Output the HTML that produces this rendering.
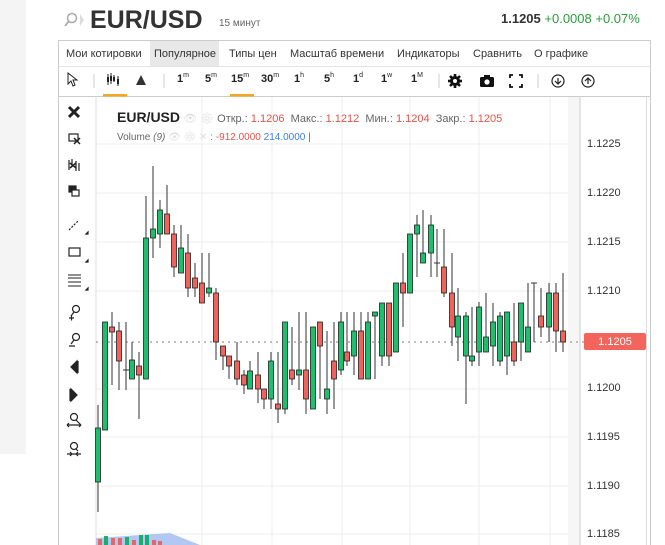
<!DOCTYPE html>
<html><head><meta charset="utf-8"><style>
*{margin:0;padding:0;box-sizing:border-box}
body{width:665px;height:545px;overflow:hidden;background:#fff;font-family:"Liberation Sans",sans-serif;position:relative;color:#333}
.a{position:absolute;white-space:nowrap}
.menu span{position:absolute;top:0;font-size:11px;line-height:26px;color:#333}
.tb{position:absolute;top:72px;font-size:11px;font-weight:bold;color:#222}
.tb sup{font-size:7px;font-weight:normal;vertical-align:5px}
.pl{position:absolute;left:587px;font-size:11px;color:#333}
</style></head><body>
<div class="a" style="left:0;top:0;width:26px;height:454px;background:#f4f4f4"></div>
<svg class="a" style="left:62px;top:11px" width="24" height="18"><circle cx="10" cy="7" r="4.5" fill="none" stroke="#aaa" stroke-width="1.5"/><line x1="7" y1="10" x2="3" y2="15" stroke="#aaa" stroke-width="1.8"/><path d="M18 3 L22 9 L18 15" fill="#ddd"/></svg>
<div class="a" style="left:90px;top:6px;font-size:25px;font-weight:bold;color:#333">EUR/USD</div>
<div class="a" style="left:219px;top:18px;font-size:10px;color:#666">15 минут</div>
<div class="a" style="left:501px;top:11px;font-size:13px"><b style="color:#333">1.1205</b> <span style="color:#2a9d3a">+0.0008 +0.07%</span></div>
<div class="a menu" style="left:58px;top:40px;width:593px;height:27px;border:1px solid #ccc;border-bottom:none">
<span style="left:7px">Мои котировки</span>
<span style="left:91px;width:69px;background:#e8e8e8;padding-left:4px">Популярное</span>
<span style="left:170px">Типы цен</span>
<span style="left:231px">Масштаб времени</span>
<span style="left:338px">Индикаторы</span>
<span style="left:414px">Сравнить</span>
<span style="left:475px">О графике</span>
</div>
<div class="a" style="left:58px;top:66px;width:593px;height:31px;border:1px solid #ccc;border-top:1px solid #e3e3e3"></div>
<svg class="a" style="left:58px;top:66px" width="593" height="31">
<path d="M10 7 L10 18 L13 15 L15 20 L17 19 L15 14 L19 14 Z" fill="#fff" stroke="#222" stroke-width="1"/>
<line x1="36" y1="8" x2="36" y2="22" stroke="#ccc"/>
<g stroke="#222"><line x1="50" y1="8" x2="50" y2="19"/><line x1="53" y1="7" x2="53" y2="18"/><line x1="56" y1="9" x2="56" y2="16"/><line x1="60" y1="10" x2="60" y2="20"/></g>
<g fill="#222"><rect x="49" y="11" width="2" height="5"/><rect x="52" y="10" width="2" height="5"/><rect x="55" y="11" width="2" height="4"/><rect x="59" y="13" width="2" height="5"/></g>
<rect x="45" y="28" width="24" height="2.5" fill="#f5a623"/>
<path d="M78 19 L83 9 L88 19 Z" fill="#333"/>
<line x1="106" y1="8" x2="106" y2="22" stroke="#ccc"/>
<rect x="172" y="28" width="24" height="2.5" fill="#f5a623"/>
<line x1="381" y1="8" x2="381" y2="22" stroke="#ccc"/>
<g transform="translate(397,15)"><circle r="5" fill="#111"/><g stroke="#111" stroke-width="2.6"><line x1="0" y1="-7" x2="0" y2="7"/><line x1="-7" y1="0" x2="7" y2="0"/><line x1="-5" y1="-5" x2="5" y2="5"/><line x1="-5" y1="5" x2="5" y2="-5"/></g><circle r="2" fill="#fff"/></g>
<g transform="translate(429,15)"><rect x="-7" y="-4" width="14" height="10" rx="1.5" fill="#111"/><rect x="-3" y="-6" width="6" height="3" fill="#111"/><circle cy="1" r="2.6" fill="#fff"/></g>
<g transform="translate(458,15)" stroke="#111" stroke-width="1.8" fill="none"><path d="M-6 -3V-6H-3M3 -6H6V-3M6 3V6H3M-3 6H-6V3"/></g>
<line x1="480" y1="8" x2="480" y2="22" stroke="#ccc"/>
<g transform="translate(500,15)" fill="none" stroke="#222" stroke-width="1.2"><circle r="6"/><path d="M0 -3V3M-3 0L0 3L3 0"/></g>
<g transform="translate(530,15)" fill="none" stroke="#222" stroke-width="1.2"><circle r="6"/><path d="M0 3V-3M-3 0L0 -3L3 0"/></g>
</svg>
<div class="tb" style="left:177px">1<sup>m</sup></div>
<div class="tb" style="left:205px">5<sup>m</sup></div>
<div class="tb" style="left:231px">15<sup>m</sup></div>
<div class="tb" style="left:261px">30<sup>m</sup></div>
<div class="tb" style="left:294px">1<sup>h</sup></div>
<div class="tb" style="left:324px">5<sup>h</sup></div>
<div class="tb" style="left:353px">1<sup>d</sup></div>
<div class="tb" style="left:381px">1<sup>w</sup></div>
<div class="tb" style="left:411px">1<sup>M</sup></div>
<div class="a" style="left:58px;top:96px;width:1px;height:449px;background:#ccc"></div>
<div class="a" style="left:650px;top:40px;width:1px;height:505px;background:#ccc"></div>
<div class="a" style="left:646px;top:97px;width:1px;height:448px;background:#ddd"></div>
<svg class="a" style="left:59px;top:97px" width="37" height="448" fill="none" stroke="#222" stroke-width="1.2">
<path d="M10 10 L20 20 M20 10 L10 20" stroke-width="3"/>
<rect x="10" y="37" width="9" height="7"/><path d="M15 41l6 6M21 41l-6 6" stroke-width="1.5"/>
<path d="M10 63v10M13 62v8M17 64v10M20 66v8" /><path d="M11 66l6 5M17 66l-6 5" stroke-width="1.5"/>
<rect x="10" y="89" width="7" height="6" fill="#222"/><rect x="13" y="93" width="7" height="6" fill="#fff"/>
<path d="M10 133 L20 123" stroke-dasharray="2 1.5"/><path d="M27 137l2 0 0-2z" fill="#222"/>
<rect x="10" y="151" width="11" height="8"/><path d="M27 165l2 0 0-2z" fill="#222"/>
<path d="M9 178h13M9 181h13M9 185h13M9 189h13" stroke-width="1"/><path d="M27 193l2 0 0-2z" fill="#222"/>
<circle cx="17" cy="212" r="3.5"/><path d="M15 215l-3 4M10 221h5M12.5 218.5v5"/>
<circle cx="17" cy="240" r="3.5"/><path d="M15 243l-3 4M10 249h6"/>
<path d="M18 264v12l-6 -6z" fill="#222"/><line x1="19" y1="264" x2="19" y2="276"/>
<path d="M12 292v12l6 -6z" fill="#222"/><line x1="11" y1="292" x2="11" y2="304"/>
<circle cx="15" cy="320" r="3.5"/><path d="M17 323l3 3M8 328h14M8 328l2-2M8 328l2 2M22 328l-2-2M22 328l-2 2"/>
<circle cx="15" cy="349" r="3.5"/><path d="M17 352l2 2M8 357h14M13 357l-2-2M13 357l-2 2M17 357l2-2M17 357l2 2"/>
</svg>
<svg class="a" style="left:0;top:0" width="665" height="545">
<g stroke="#eee" stroke-width="1">
<line x1="96" y1="144" x2="580" y2="144"/><line x1="96" y1="193" x2="580" y2="193"/><line x1="96" y1="242" x2="580" y2="242"/><line x1="96" y1="291" x2="580" y2="291"/><line x1="96" y1="389" x2="580" y2="389"/><line x1="96" y1="437" x2="580" y2="437"/><line x1="96" y1="486" x2="580" y2="486"/><line x1="96" y1="534" x2="580" y2="534"/>
<line x1="202" y1="97" x2="202" y2="545"/><line x1="272" y1="97" x2="272" y2="545"/><line x1="342" y1="97" x2="342" y2="545"/><line x1="410" y1="97" x2="410" y2="545"/><line x1="479" y1="97" x2="479" y2="545"/><line x1="550" y1="97" x2="550" y2="545"/>
</g>
<line x1="96" y1="97" x2="96" y2="545" stroke="#ddd"/>
<rect x="568" y="97" width="12" height="448" fill="#f6f6f6"/>
<line x1="580" y1="97" x2="580" y2="545" stroke="#ccc"/>
<line x1="96" y1="342" x2="584" y2="342" stroke="#999" stroke-dasharray="2 4" stroke-width="1.3"/>
<g stroke="#333" stroke-width="1">
<line x1="98" y1="405" x2="98" y2="512"/><line x1="105" y1="322" x2="105" y2="430"/><line x1="112" y1="312" x2="112" y2="385"/><line x1="119" y1="322" x2="119" y2="390"/><line x1="126" y1="322" x2="126" y2="390"/><line x1="132" y1="342" x2="132" y2="379"/><line x1="139" y1="352" x2="139" y2="419"/><line x1="146" y1="196" x2="146" y2="379"/><line x1="153" y1="166" x2="153" y2="258"/><line x1="160" y1="200" x2="160" y2="248"/><line x1="167" y1="185" x2="167" y2="234"/><line x1="174" y1="225" x2="174" y2="277"/><line x1="181" y1="225" x2="181" y2="273"/><line x1="188" y1="234" x2="188" y2="297"/><line x1="195" y1="263" x2="195" y2="297"/><line x1="202" y1="253" x2="202" y2="303"/><line x1="209" y1="253" x2="209" y2="297"/><line x1="216" y1="288" x2="216" y2="360"/><line x1="223" y1="346" x2="223" y2="370"/><line x1="229" y1="356" x2="229" y2="379"/><line x1="237" y1="342" x2="237" y2="385"/><line x1="244" y1="370" x2="244" y2="394"/><line x1="250" y1="361" x2="250" y2="389"/><line x1="258" y1="352" x2="258" y2="403"/><line x1="264" y1="389" x2="264" y2="409"/><line x1="271" y1="352" x2="271" y2="409"/><line x1="278" y1="352" x2="278" y2="423"/><line x1="285" y1="322" x2="285" y2="414"/><line x1="292" y1="327" x2="292" y2="385"/><line x1="299" y1="312" x2="299" y2="390"/><line x1="306" y1="312" x2="306" y2="414"/><line x1="313" y1="327" x2="313" y2="409"/><line x1="320" y1="322" x2="320" y2="399"/><line x1="327" y1="331" x2="327" y2="414"/><line x1="334" y1="322" x2="334" y2="409"/><line x1="341" y1="312" x2="341" y2="375"/><line x1="347" y1="312" x2="347" y2="366"/><line x1="354" y1="312" x2="354" y2="375"/><line x1="361" y1="312" x2="361" y2="379"/><line x1="368" y1="312" x2="368" y2="379"/><line x1="375" y1="312" x2="375" y2="379"/><line x1="382" y1="303" x2="382" y2="366"/><line x1="389" y1="303" x2="389" y2="366"/><line x1="396" y1="283" x2="396" y2="352"/><line x1="403" y1="253" x2="403" y2="327"/><line x1="410" y1="234" x2="410" y2="293"/><line x1="417" y1="215" x2="417" y2="277"/><line x1="423" y1="210" x2="423" y2="263"/><line x1="431" y1="215" x2="431" y2="277"/><line x1="437" y1="229" x2="437" y2="277"/><line x1="434" y1="263" x2="440" y2="263"/><line x1="444" y1="229" x2="444" y2="297"/><line x1="452" y1="253" x2="452" y2="346"/><line x1="458" y1="288" x2="458" y2="361"/><line x1="466" y1="312" x2="466" y2="404"/><line x1="472" y1="307" x2="472" y2="366"/><line x1="479" y1="302" x2="479" y2="366"/><line x1="486" y1="293" x2="486" y2="352"/><line x1="493" y1="303" x2="493" y2="366"/><line x1="500" y1="312" x2="500" y2="366"/><line x1="507" y1="312" x2="507" y2="375"/><line x1="514" y1="303" x2="514" y2="366"/><line x1="521" y1="303" x2="521" y2="361"/><line x1="528" y1="283" x2="528" y2="352"/><line x1="534" y1="283" x2="534" y2="342"/><line x1="531" y1="283" x2="537" y2="283"/><line x1="541" y1="288" x2="541" y2="337"/><line x1="549" y1="283" x2="549" y2="342"/><line x1="556" y1="283" x2="556" y2="352"/><line x1="563" y1="273" x2="563" y2="352"/><line x1="123" y1="370" x2="129" y2="370"/>
</g>
<g stroke="#222" stroke-width="0.8">
<g fill="#1bbf6c">
<rect x="95.5" y="428" width="5" height="54"/><rect x="102.5" y="322" width="5" height="108"/><rect x="129.5" y="360" width="5" height="19"/><rect x="143.5" y="238" width="5" height="141"/><rect x="150.5" y="229" width="5" height="9"/><rect x="157.5" y="210" width="5" height="24"/><rect x="178.5" y="248" width="5" height="25"/><rect x="206.5" y="288" width="5" height="5"/><rect x="247.5" y="371" width="5" height="18"/><rect x="268.5" y="361" width="5" height="38"/><rect x="282.5" y="322" width="5" height="87"/><rect x="296.5" y="370" width="5" height="5"/><rect x="310.5" y="327" width="5" height="82"/><rect x="324.5" y="389" width="5" height="10"/><rect x="338.5" y="322" width="5" height="48"/><rect x="351.5" y="331" width="5" height="25"/><rect x="365.5" y="322" width="5" height="57"/><rect x="372.5" y="312" width="5" height="4"/><rect x="379.5" y="303" width="5" height="53"/><rect x="393.5" y="283" width="5" height="69"/><rect x="407.5" y="234" width="5" height="59"/><rect x="414.5" y="225" width="5" height="9"/><rect x="420.5" y="253" width="5" height="10"/><rect x="428.5" y="225" width="5" height="28"/><rect x="455.5" y="316" width="5" height="21"/><rect x="463.5" y="316" width="5" height="40"/><rect x="469.5" y="356" width="5" height="5"/><rect x="476.5" y="307" width="5" height="45"/><rect x="483.5" y="337" width="5" height="15"/><rect x="490.5" y="322" width="5" height="24"/><rect x="497.5" y="316" width="5" height="45"/><rect x="504.5" y="312" width="5" height="44"/><rect x="518.5" y="303" width="5" height="39"/><rect x="525.5" y="327" width="5" height="25"/><rect x="546.5" y="293" width="5" height="34"/>
</g>
<g fill="#f0625a">
<rect x="109.5" y="327" width="5" height="5"/><rect x="116.5" y="331" width="5" height="30"/><rect x="136.5" y="366" width="5" height="9"/><rect x="164.5" y="214" width="5" height="20"/><rect x="171.5" y="234" width="5" height="33"/><rect x="185.5" y="253" width="5" height="35"/><rect x="192.5" y="278" width="5" height="10"/><rect x="199.5" y="283" width="5" height="20"/><rect x="213.5" y="293" width="5" height="49"/><rect x="220.5" y="346" width="5" height="10"/><rect x="226.5" y="356" width="5" height="10"/><rect x="234.5" y="361" width="5" height="18"/><rect x="241.5" y="375" width="5" height="10"/><rect x="255.5" y="375" width="5" height="14"/><rect x="261.5" y="389" width="5" height="10"/><rect x="275.5" y="404" width="5" height="5"/><rect x="289.5" y="370" width="5" height="9"/><rect x="303.5" y="370" width="5" height="29"/><rect x="317.5" y="322" width="5" height="24"/><rect x="331.5" y="361" width="5" height="18"/><rect x="344.5" y="352" width="5" height="9"/><rect x="358.5" y="331" width="5" height="48"/><rect x="386.5" y="303" width="5" height="53"/><rect x="400.5" y="283" width="5" height="10"/><rect x="441.5" y="267" width="5" height="26"/><rect x="449.5" y="293" width="5" height="34"/><rect x="511.5" y="342" width="5" height="19"/><rect x="538.5" y="316" width="5" height="11"/><rect x="553.5" y="293" width="5" height="38"/><rect x="560.5" y="331" width="5" height="11"/>
</g></g>
<path d="M96 545 L96 538 L170 533 L200 545Z" fill="#9fb9ee" opacity="0.8"/>
<g fill="#e06a6a"><rect x="98" y="539" width="4" height="6"/><rect x="111" y="538" width="4" height="7"/><rect x="118" y="538" width="4" height="7"/><rect x="132" y="540" width="4" height="5"/><rect x="152" y="540" width="4" height="5"/><rect x="158" y="541" width="4" height="4"/></g>
<g fill="#1bae6c"><rect x="104" y="536" width="4" height="9"/><rect x="125" y="537" width="4" height="8"/><rect x="139" y="535" width="4" height="10"/><rect x="145" y="535" width="4" height="10"/></g>
<rect x="584" y="333" width="62" height="17" rx="2" fill="#f2645c"/>
<text x="615" y="345" text-anchor="middle" font-size="11" fill="#fff" font-family="Liberation Sans">1.1205</text>
</svg>
<div class="pl" style="top:138px">1.1225</div>
<div class="pl" style="top:187px">1.1220</div>
<div class="pl" style="top:236px">1.1215</div>
<div class="pl" style="top:285px">1.1210</div>
<div class="pl" style="top:382px">1.1200</div>
<div class="pl" style="top:431px">1.1195</div>
<div class="pl" style="top:480px">1.1190</div>
<div class="pl" style="top:528px">1.1185</div>
<div class="a" style="left:117px;top:109px;font-size:11px;color:#666"><b style="font-size:14px;color:#222">EUR/USD</b> <span style="color:#ddd">👁 ⚙</span> Откр.: <span style="color:#e0524a">1.1206</span>&nbsp; Макс.: <span style="color:#e0524a">1.1212</span>&nbsp; Мин.: <span style="color:#e0524a">1.1204</span>&nbsp; Закр.: <span style="color:#e0524a">1.1205</span></div>
<div class="a" style="left:117px;top:132px;font-size:10px;color:#666">Volume <i>(9)</i> <span style="color:#ddd">👁 ⚙ ✕</span> : <span style="color:#e0524a">-912.0000</span> <span style="color:#3a7ee0">214.0000</span> |</div>
</body></html>
